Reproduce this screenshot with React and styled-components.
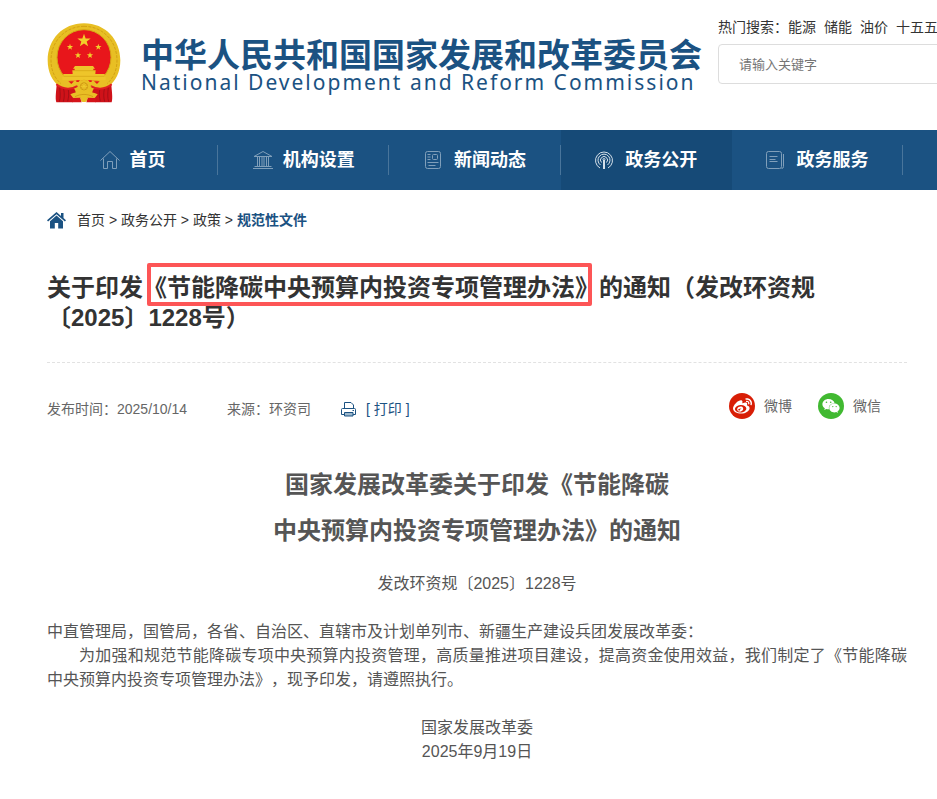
import React, { useState } from "react";
import styled, { createGlobalStyle } from "styled-components";
import { FaWeibo, FaWeixin } from "react-icons/fa";

const hotWords = ["能源", "储能", "油价", "十五五"];

const navItems = [
    { label: "首页", icon: HomeIcon },
    { label: "机构设置", icon: BankIcon },
    { label: "新闻动态", icon: NewsIcon },
    { label: "政务公开", icon: SignalIcon, active: true },
    { label: "政务服务", icon: BookIcon },
];

const crumbs = ["首页", "政务公开", "政策"];

export default function App() {
    const [search, setSearch] = useState("");

    const handleSubmit = (e) => {
        e.preventDefault();
    };

    return (
        <>
            <GlobalStyle />
            <Header>
                <Logo href="#">
                    <Emblem />
                    <LogoText>
                        <LogoName>中华人民共和国国家发展和改革委员会</LogoName>
                        <LogoEnglish>National Development and Reform Commission</LogoEnglish>
                    </LogoText>
                </Logo>
                <Search onSubmit={handleSubmit}>
                    <HotWords>
                        <span>热门搜索：</span>
                        <HotList>
                            {hotWords.map((word) => (
                                <a href="#" key={word}>
                                    {word}
                                </a>
                            ))}
                        </HotList>
                    </HotWords>
                    <SearchInput
                        type="text"
                        aria-label="搜索"
                        placeholder="请输入关键字"
                        value={search}
                        onChange={(e) => setSearch(e.target.value)}
                    />
                </Search>
            </Header>

            <Nav>
                {navItems.map(({ label, icon: Icon, active }) => (
                    <NavItem href="#" key={label} $active={active}>
                        <Icon />
                        {label}
                    </NavItem>
                ))}
            </Nav>

            <Main>
                <Breadcrumb>
                    <SolidHome />
                    <p>
                        {crumbs.map((crumb) => (
                            <React.Fragment key={crumb}>
                                <a href="#">{crumb}</a>
                                {" > "}
                            </React.Fragment>
                        ))}
                        <Current href="#">规范性文件</Current>
                    </p>
                </Breadcrumb>

                <Title>
                    关于印发<Marked>《节能降碳中央预算内投资专项管理办法》</Marked>的通知（发改环资规〔2025〕1228号）
                </Title>

                <Meta>
                    <Info>
                        <span>发布时间：2025/10/14</span>
                        <span>来源：环资司</span>
                        <PrintButton type="button">
                            <PrinterIcon />[ 打印 ]
                        </PrintButton>
                    </Info>
                    <Share>
                        <ShareLink href="#">
                            <Badge $color="#d81e06">
                                <FaWeibo size={19} />
                            </Badge>
                            微博
                        </ShareLink>
                        <ShareLink href="#">
                            <Badge $color="#41b931">
                                <FaWeixin size={18} />
                            </Badge>
                            微信
                        </ShareLink>
                    </Share>
                </Meta>

                <Article>
                    <DocTitle>
                        国家发展改革委关于印发《节能降碳
                        <br />
                        中央预算内投资专项管理办法》的通知
                    </DocTitle>
                    <Centered>发改环资规〔2025〕1228号</Centered>
                    <Body>
                        <p>中直管理局，国管局，各省、自治区、直辖市及计划单列市、新疆生产建设兵团发展改革委：</p>
                        <Indented>
                            为加强和规范节能降碳专项中央预算内投资管理，高质量推进项目建设，提高资金使用效益，我们制定了《节能降碳中央预算内投资专项管理办法》，现予印发，请遵照执行。
                        </Indented>
                    </Body>
                    <Centered>
                        国家发展改革委
                        <br />
                        2025年9月19日
                    </Centered>
                </Article>
            </Main>
        </>
    );
}

function starPoints(cx, cy, r) {
    const points = [];
    for (let i = 0; i < 10; i++) {
        const radius = i % 2 ? r * 0.4 : r;
        const angle = (Math.PI / 5) * i - Math.PI / 2;
        points.push(`${cx + radius * Math.cos(angle)},${cy + radius * Math.sin(angle)}`);
    }
    return points.join(" ");
}

function Emblem() {
    return (
        <svg width="74" height="81" viewBox="20 22 222 243" aria-hidden="true">
            <path
                d="M131 23C67 23 22 72 22 134c0 35 14 62 34 78l30 34h90l30-34c20-16 34-43 34-78C240 72 195 23 131 23z"
                fill="#e8bf24"
            />
            <path
                d="M131 32C74 32 32 77 32 134c0 31 12 55 30 70M131 32c57 0 99 45 99 102 0 31-12 55-30 70"
                fill="none"
                stroke="#d3a114"
                strokeWidth="3"
                strokeDasharray="9 4"
            />
            <ellipse cx="131" cy="125" rx="81" ry="83" fill="#e8161b" stroke="#d6a516" strokeWidth="3" />
            <g fill="#f2cf2a">
                <polygon points={starPoints(131, 75, 21)} />
                <polygon points={starPoints(89, 94, 10)} />
                <polygon points={starPoints(174, 94, 10)} />
                <polygon points={starPoints(113, 119, 10)} />
                <polygon points={starPoints(149, 119, 10)} />
            </g>
            <path d="M104 151h54l6 8h-5v5h7l-1 11h28v9h3v10H66v-10h3v-9h28l-1-11h7v-5h-5z" fill="#eec52a" />
            <path d="M98 165h66M70 182h122" stroke="#d3a114" strokeWidth="2" />
            <path d="M62 194h138l-14 24H76z" fill="#e9bf25" />
            <path d="M84 197h17l-8 8zm77 0h17l-8 8zM108 194h12v5h-12zm34 0h12v5h-12z" fill="#e8161b" />
            <path d="M49 204c12 13 29 15 51 14 8 8 9 20-2 28v14H48c-4-15 0-34 1-56z" fill="#cf1219" />
            <path d="M213 204c-12 13-29 15-51 14-8 8-9 20 2 28v14h50c4-15 0-34-1-56z" fill="#cf1219" />
            <path
                d="M58 215c2 18 3 30-1 43M70 220c3 15 2 27-1 38M84 222c2 14 1 24-2 35M204 215c-2 18-3 30 1 43M192 220c-3 15-2 27 1 38M178 222c-2 14-1 24 2 35"
                fill="none"
                stroke="#a50e16"
                strokeWidth="3"
            />
            <path d="M48 206c22 18 48 15 66 4M214 206c-22 18-48 15-66 4" fill="none" stroke="#e02020" strokeWidth="6" />
            <circle cx="131" cy="212" r="19" fill="#e9bf25" stroke="#e9bf25" strokeWidth="6" strokeDasharray="7 5" />
            <circle cx="131" cy="212" r="11" fill="#dca81c" stroke="#c9900f" strokeWidth="2" />
            <path d="M131 202v20M121 212h20M124 205l14 14M138 205l-14 14" stroke="#f0cb2c" strokeWidth="3" />
            <path d="M90 236c24-11 58-11 82 0l-8 10-22 1q-11 12-22 0l-22-1z" fill="#e9bf25" />
            <path d="M104 243c18-9 36-9 54 0" fill="none" stroke="#c9900f" strokeWidth="2" />
            <path d="M96 247l24-1 4 14H96zM166 247l-24-1-4 14h28z" fill="#d5141a" />
            <circle cx="131" cy="249" r="10" fill="#e9bf25" />
        </svg>
    );
}

function HomeIcon() {
    return (
        <NavSvg>
            <path d="M.5 10.5L10 1.500l9.500 9M3.500 8.500v10h4v-7h5v7h4v-10" />
        </NavSvg>
    );
}

function BankIcon() {
    return (
        <NavSvg>
            <path d="M1 6.500L10 1.500l9 5zM0 18.500h20M1.500 16.500h17M4.500 7v9M6.500 7v9M9 7v9M11 7v9M13.500 7v9M15.500 7v9" />
        </NavSvg>
    );
}

function NewsIcon() {
    return (
        <NavSvg>
            <rect x="1.500" y="1.500" width="15" height="17" rx="2" />
            <rect x="8.500" y="4.500" width="5" height="5" rx="1" />
            <path d="M3.500 4.500h3M3.500 7h3M3.500 9.500h3M3.500 12.500h11M4.500 15.500h7" />
        </NavSvg>
    );
}

function SignalIcon() {
    return (
        <NavSvg $bright>
            <path d="M5 18A8.500 8.500 0 1 1 13 18M5.500 15A6 6 0 1 1 12.500 15M6.500 12.500A3.500 3.500 0 1 1 11.500 12.500" />
            <path d="M9 10v9" strokeWidth="2" />
            <circle cx="9" cy="9.500" r="1" />
        </NavSvg>
    );
}

function BookIcon() {
    return (
        <NavSvg>
            <rect x=".5" y="1.500" width="15" height="17" rx="2" />
            <path d="M17.500 4v12.500q0 2-2 2M3.500 6.500h8M3.500 9.500h6M3.500 11.500h8" />
        </NavSvg>
    );
}

function SolidHome() {
    return (
        <svg width="20" height="17" viewBox="0 0 20 17" fill="#1b5282" aria-hidden="true">
            <path d="M9.500 0L0 8.300l1.100 1.200 8.400-7.300 8.400 7.300L19 8.300l-2.500-2.200V1h-2.500v2.900z" />
            <path d="M9.500 3.500L3 9.200V16.500h4.800V11h3.400v5.500H16V9.200z" />
        </svg>
    );
}

function PrinterIcon() {
    return (
        <svg width="16" height="16" viewBox="0 0 16 16" fill="none" stroke="#1b5282" aria-hidden="true">
            <path d="M3.500 7.500v-6h6.500l2.500 2.500v3.500M3 13.500H.5v-5q0-1 1-1h12q1 0 1 1v5H12" />
            <path d="M3.500 11.500h8.500v3.500H3.500z" fill="#9db8cd" />
            <path d="M11.500 9.500h1.500" />
        </svg>
    );
}

const GlobalStyle = createGlobalStyle`
    * {
        box-sizing: border-box;
        margin: 0;
        padding: 0;
    }

    body {
        background: #fff;
        color: #333;
        font-family: "Liberation Sans", "Noto Sans CJK SC", sans-serif;
        font-size: 14px;
        line-height: 20px;
        text-spacing-trim: space-all;
        overflow-x: hidden;
    }

    a {
        color: inherit;
        text-decoration: none;
    }
`;

const Header = styled.header`
    display: flex;
    align-items: flex-start;
    gap: 16px;
    height: 130px;
    padding: 16px 0 0 47px;
    overflow: hidden;
`;

const Logo = styled.a`
    display: flex;
    flex-shrink: 0;
    gap: 20px;
    padding-top: 7px;
    color: #1b5282;
`;

const LogoText = styled.div`
    display: flex;
    flex-direction: column;
    padding-top: 14px;
    white-space: nowrap;
`;

const LogoName = styled.strong`
    font-size: 33px;
    line-height: 38px;
`;

const LogoEnglish = styled.span`
    font-family: "Noto Sans", sans-serif;
    font-size: 21px;
    line-height: 14px;
    letter-spacing: 2px;
`;

const Search = styled.form`
    display: flex;
    flex: 1 0 280px;
    flex-direction: column;
    gap: 6px;
`;

const HotWords = styled.div`
    display: flex;
    line-height: 22px;
    white-space: nowrap;
`;

const HotList = styled.div`
    display: flex;
    gap: 8px;
`;

const SearchInput = styled.input`
    height: 40px;
    padding: 0 20px;
    border: 1px solid #ddd;
    border-radius: 4px;
    color: #333;
    font-family: inherit;
    font-size: 13px;

    &::placeholder {
        color: #757575;
    }
`;

const Nav = styled.nav`
    display: grid;
    grid-template-columns: repeat(5, 1fr);
    height: 60px;
    padding: 0 34px 0 47px;
    background: #1b5282;
`;

const NavItem = styled.a`
    display: flex;
    align-items: center;
    justify-content: center;
    gap: 10px;
    background: ${({ $active }) => ($active ? "#164a77" : "none")};
    color: #fff;
    font-size: 18px;
    font-weight: bold;

    &::after {
        content: "";
        width: 1px;
        height: 30px;
        margin-left: auto;
        background: ${({ $active }) => ($active ? "none" : "#49759b")};
    }

    &::before {
        content: "";
        width: 1px;
        margin-right: auto;
    }
`;

const NavSvg = styled.svg.attrs({ width: 20, height: 20, viewBox: "0 0 20 20", "aria-hidden": true })`
    fill: none;
    stroke: ${({ $bright }) => ($bright ? "#d5e0e9" : "#809fba")};
`;

const Main = styled.main`
    padding: 20px 30px 34px 47px;
`;

const Breadcrumb = styled.div`
    display: flex;
    align-items: center;
    gap: 10px;
`;

const Current = styled.a`
    color: #1b5282;
    font-weight: bold;
`;

const Title = styled.h1`
    margin-top: 43px;
    padding-bottom: 29px;
    border-bottom: 1px dashed #e2e2e2;
    font-size: 24px;
    line-height: 30px;
`;

const Marked = styled.span`
    display: inline-block;
    position: relative;

    &::after {
        content: "";
        position: absolute;
        inset: -10px 7px -3px 4px;
        border: 4px solid #fd5556;
        border-radius: 2px;
    }
`;

const Meta = styled.div`
    display: flex;
    align-items: flex-start;
    justify-content: space-between;
    padding: 30px 26px 0 0;
    color: #666;
`;

const Info = styled.div`
    display: flex;
    align-items: center;
    padding-top: 6px;

    span {
        margin-right: 40px;
    }
`;

const PrintButton = styled.button`
    display: flex;
    align-items: center;
    gap: 9px;
    margin-left: -10px;
    border: none;
    background: none;
    color: #1b5282;
    font-family: inherit;
    font-size: 14px;
    line-height: 20px;
    cursor: pointer;
`;

const Share = styled.div`
    display: flex;
    gap: 26px;
`;

const ShareLink = styled.a`
    display: flex;
    align-items: center;
    gap: 9px;
`;

const Badge = styled.span`
    display: flex;
    align-items: center;
    justify-content: center;
    width: 26px;
    height: 26px;
    border-radius: 50%;
    background: ${({ $color }) => $color};
    color: #fff;
`;

const Article = styled.article`
    padding-top: 43px;
    color: #555;
    font-size: 16px;
    line-height: 24px;
`;

const DocTitle = styled.h2`
    margin-bottom: 18px;
    font-size: 24px;
    line-height: 46px;
    text-align: center;
`;

const Centered = styled.p`
    text-align: center;
`;

const Body = styled.div`
    margin: 24px 0;
    text-align: justify;
`;

const Indented = styled.p`
    text-indent: 2em;
`;
